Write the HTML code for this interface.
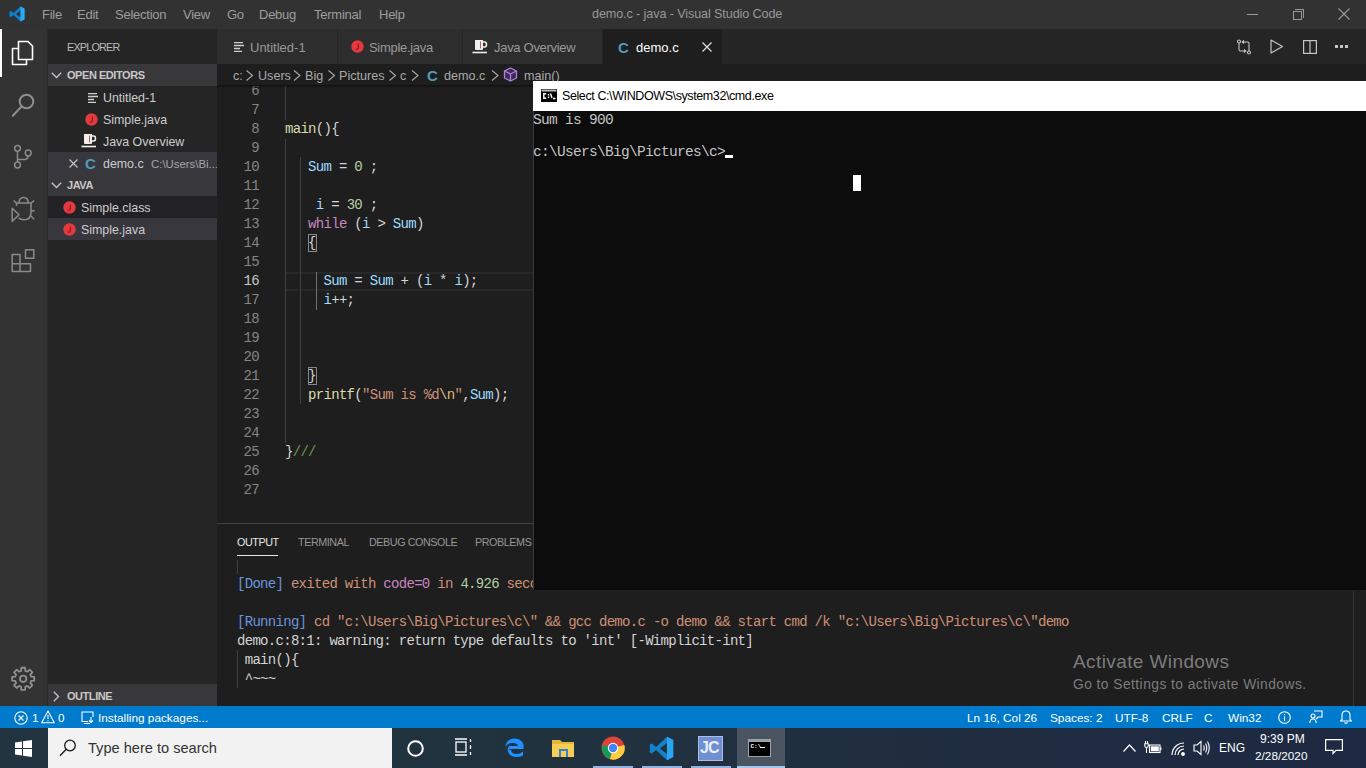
<!DOCTYPE html>
<html><head><meta charset="utf-8">
<style>
*{margin:0;padding:0;box-sizing:border-box}
html,body{width:1366px;height:768px;overflow:hidden;background:#1e1e1e;font-family:"Liberation Sans",sans-serif;}
.a{position:absolute}
.t{position:absolute;white-space:pre;line-height:1}
#title{left:0;top:0;width:1366px;height:29px;background:#323233}
#act{left:0;top:29px;width:48px;height:677px;background:#333333}
#side{left:48px;top:29px;width:169px;height:677px;background:#252526;overflow:hidden}
#tabs{left:217px;top:29px;width:1149px;height:35px;background:#252526}
#editor{left:217px;top:64px;width:1149px;height:459px;background:#1e1e1e;overflow:hidden}
#panel{left:217px;top:523px;width:1149px;height:183px;background:#1e1e1e;border-top:1px solid #414141;overflow:hidden}
#status{left:0;top:706px;width:1366px;height:22px;background:#007acc}
#taskbar{left:0;top:728px;width:1366px;height:40px;background:linear-gradient(90deg,#22343f 0%,#21323f 40%,#1f2c40 75%,#1d2942 100%)}
.mono{font-family:"Liberation Mono",monospace}
.menu{top:8px;font-size:13px;letter-spacing:-0.25px;color:#9d9d9d}
.sh{position:absolute;left:0;width:169px;height:22px;background:#38383a}
.hd{font-size:11px;letter-spacing:-0.45px;font-weight:bold;color:#c8c8c8}
.it{font-size:12.4px;color:#cccccc}
.tab{position:absolute;top:0;height:35px;background:#2d2d2d;border-right:1px solid #252526}
.tt{font-size:13px;color:#999999;top:12px}
.bc{font-size:12.6px;color:#a9a9a9;top:70px}
.chev{position:absolute}
.st{font-size:11.8px;color:#ffffff;top:7px}
</style></head><body>
<!-- TITLE -->
<div id="title" class="a">
 <svg class="a" style="left:9px;top:6px" width="16" height="16" viewBox="0 0 16 16">
  <path d="M11.5 0.5 L15.5 2.5 V13.5 L11.5 15.5 L4.5 9 L1.8 11.2 L0.5 10.5 V5.5 L1.8 4.8 L4.5 7 Z M11.5 4.5 L7 8 L11.5 11.5 Z" fill="#0f7fd0" fill-rule="evenodd"/>
  <path d="M11.5 0.5 L15.5 2.5 V13.5 L11.5 15.5 Z" fill="#2aaaf0"/>
 </svg>
 <span class="t menu" style="left:42px">File</span>
 <span class="t menu" style="left:77px">Edit</span>
 <span class="t menu" style="left:115px">Selection</span>
 <span class="t menu" style="left:183px">View</span>
 <span class="t menu" style="left:227px">Go</span>
 <span class="t menu" style="left:259px">Debug</span>
 <span class="t menu" style="left:314px">Terminal</span>
 <span class="t menu" style="left:379px">Help</span>
 <span class="t" style="left:592px;top:8px;font-size:12.6px;letter-spacing:-0.1px;color:#989898">demo.c - java - Visual Studio Code</span>
 <div class="a" style="left:1247px;top:14px;width:11px;height:1px;background:#9a9a9a"></div>
 <div class="a" style="left:1293px;top:11px;width:9px;height:9px;border:1px solid #9a9a9a"></div>
 <div class="a" style="left:1295px;top:9px;width:9px;height:9px;border-top:1px solid #9a9a9a;border-right:1px solid #9a9a9a"></div>
 <svg class="a" style="left:1338px;top:8px" width="12" height="12" viewBox="0 0 12 12"><path d="M0.5 0.5 L11.5 11.5 M11.5 0.5 L0.5 11.5" stroke="#9a9a9a" stroke-width="1.1"/></svg>
</div>
<!-- ACTIVITY BAR -->
<div id="act" class="a">
 <div class="a" style="left:47px;top:0;width:1px;height:677px;background:#2b2b2b"></div>
 <div class="a" style="left:0;top:0;width:2px;height:48px;background:#ffffff"></div>
 <svg class="a" style="left:0;top:0" width="48" height="260" viewBox="0 29 48 260" fill="none" stroke-linejoin="round">
  <!-- files -->
  <path d="M18.5 41.5 H28 L32.5 46 V59.5 H18.5 Z" stroke="#ffffff" stroke-width="1.6"/>
  <path d="M18.5 48.5 H12.5 V64.5 H26.5 V59.5" stroke="#ffffff" stroke-width="1.6"/>
  <!-- search -->
  <circle cx="26.5" cy="101.5" r="6.8" stroke="#8f8f8f" stroke-width="2"/>
  <path d="M21.5 106.5 L12.8 115.8" stroke="#8f8f8f" stroke-width="2" stroke-linecap="round"/>
  <!-- scm -->
  <circle cx="17.5" cy="148.3" r="2.9" stroke="#8a8a8a" stroke-width="1.5"/>
  <circle cx="28.2" cy="153" r="2.9" stroke="#8a8a8a" stroke-width="1.5"/>
  <circle cx="17.5" cy="165" r="2.9" stroke="#8a8a8a" stroke-width="1.5"/>
  <path d="M17.5 151.2 V162.1 M28.2 155.9 Q28 159.5 24 159.5 H17.5" stroke="#8a8a8a" stroke-width="1.5"/>
  <!-- debug -->
  <path d="M19 203 Q19 197.5 23.6 197.5 Q28.2 197.5 28.2 203" stroke="#8a8a8a" stroke-width="1.5"/>
  <path d="M16.5 206 V203 H31 V212.5 Q31 219.8 23.8 219.8 Q20.5 219.8 18.6 217.8" stroke="#8a8a8a" stroke-width="1.5"/>
  <path d="M13.6 200.6 L16.5 203 M34.2 200.6 L31 203 M31 210.8 H34.6 M31 216 L34 219.2" stroke="#8a8a8a" stroke-width="1.4"/>
  <path d="M12.2 208.2 V221.4 L19 214.8 Z" stroke="#8a8a8a" stroke-width="1.5"/>
  <!-- extensions -->
  <path d="M12.2 254.5 H20 V263.8 H30.5 V271.4 H12.2 Z M12.2 263.8 H20 V271.4" stroke="#8a8a8a" stroke-width="1.5"/>
  <path d="M25.5 249.8 H33.8 V258.2 H25.5 Z" stroke="#8a8a8a" stroke-width="1.5"/>
 </svg>
 <svg class="a" style="left:0;top:-29px" width="48" height="706" viewBox="0 0 48 706" fill="none">
  <path d="M21.09 670.88 L21.31 667.76 L25.09 667.76 L25.31 670.88 L27.31 671.71 L29.67 669.65 L32.35 672.33 L30.29 674.69 L31.12 676.69 L34.24 676.91 L34.24 680.69 L31.12 680.91 L30.29 682.91 L32.35 685.27 L29.67 687.95 L27.31 685.89 L25.31 686.72 L25.09 689.84 L21.31 689.84 L21.09 686.72 L19.09 685.89 L16.73 687.95 L14.05 685.27 L16.11 682.91 L15.28 680.91 L12.16 680.69 L12.16 676.91 L15.28 676.69 L16.11 674.69 L14.05 672.33 L16.73 669.65 L19.09 671.71 Z" stroke="#8f8f8f" stroke-width="1.8" stroke-linejoin="round"/>
  <circle cx="23.2" cy="678.8" r="3.2" stroke="#8f8f8f" stroke-width="1.8"/>
 </svg>
</div>
<!-- SIDEBAR -->
<div id="side" class="a">
 <span class="t" style="left:19px;top:13px;font-size:10.8px;letter-spacing:-0.8px;color:#bbbbbb">EXPLORER</span>
 <div class="sh" style="top:35px"></div>
 <svg class="a" style="left:3px;top:43px" width="12" height="7" viewBox="0 0 12 7" fill="none"><path d="M0.8 0.8 L5.5 5.5 L10.2 0.8" stroke="#c5c5c5" stroke-width="1.3"/></svg>
 <span class="t hd" style="left:19px;top:41px">OPEN EDITORS</span>
 <!-- Untitled-1 -->
 <svg class="a" style="left:40px;top:64px" width="11" height="10" viewBox="0 0 11 10"><path d="M0 0.5 H9 M0 3.5 H10 M0 6.5 H6 M0 9.5 H8" stroke="#cfcfcf" stroke-width="1.3"/></svg>
 <span class="t it" style="left:55px;top:63px">Untitled-1</span>
 <!-- Simple.java -->
 <svg class="a" style="left:37px;top:84px" width="13" height="13" viewBox="0 0 13 13"><circle cx="6.5" cy="6.5" r="6.2" fill="#e3393f"/><path d="M7.3 3.5 V8 Q7.3 9.3 6 9.3 Q5 9.3 4.8 8.6" stroke="#6a1518" stroke-width="0.9" fill="none"/></svg>
 <span class="t it" style="left:55px;top:85px">Simple.java</span>
 <!-- Java Overview -->
 <svg class="a" style="left:33px;top:104px" width="16" height="15" viewBox="0 0 16 15"><path d="M3 1 H11 V10 Q11 11 10 11 H4 Q3 11 3 10 Z" fill="#f0f0f0"/><path d="M11 3 H12.5 Q14.5 3 14.5 5.5 Q14.5 8 12.5 8 H11" stroke="#f0f0f0" stroke-width="1.5" fill="none"/><path d="M0.5 13.5 H15" stroke="#f0f0f0" stroke-width="1.6"/><path d="M8.5 2.5 V9.5" stroke="#c02b2b" stroke-width="0.8"/></svg>
 <span class="t it" style="left:55px;top:107px">Java Overview</span>
 <!-- demo.c row -->
 <div class="a" style="left:0;top:123px;width:169px;height:22px;background:#37373d"></div>
 <svg class="a" style="left:21px;top:130px" width="9" height="9" viewBox="0 0 9 9"><path d="M0.5 0.5 L8.5 8.5 M8.5 0.5 L0.5 8.5" stroke="#c5c5c5" stroke-width="1.2"/></svg>
 <span class="t" style="left:37px;top:127px;font-size:15px;font-weight:bold;color:#519aba">C</span>
 <span class="t it" style="left:55px;top:129px">demo.c</span>
 <span class="t" style="left:103px;top:130px;font-size:11.4px;color:#a6a6a6">C:\Users\Bi...</span>
 <!-- JAVA header -->
 <div class="sh" style="top:145px"></div>
 <svg class="a" style="left:3px;top:153px" width="12" height="7" viewBox="0 0 12 7" fill="none"><path d="M0.8 0.8 L5.5 5.5 L10.2 0.8" stroke="#c5c5c5" stroke-width="1.3"/></svg>
 <span class="t hd" style="left:19px;top:151px">JAVA</span>
 <!-- Simple.class -->
 <div class="a" style="left:0;top:167px;width:169px;height:22px;background:#222224"></div>
 <svg class="a" style="left:15px;top:172px" width="13" height="13" viewBox="0 0 13 13"><circle cx="6.5" cy="6.5" r="6.2" fill="#e3393f"/><path d="M7.3 3.5 V8 Q7.3 9.3 6 9.3 Q5 9.3 4.8 8.6" stroke="#6a1518" stroke-width="0.9" fill="none"/></svg>
 <span class="t it" style="left:33px;top:173px">Simple.class</span>
 <!-- Simple.java selected -->
 <div class="a" style="left:0;top:189px;width:169px;height:22px;background:#37373d"></div>
 <svg class="a" style="left:15px;top:194px" width="13" height="13" viewBox="0 0 13 13"><circle cx="6.5" cy="6.5" r="6.2" fill="#e3393f"/><path d="M7.3 3.5 V8 Q7.3 9.3 6 9.3 Q5 9.3 4.8 8.6" stroke="#6a1518" stroke-width="0.9" fill="none"/></svg>
 <span class="t it" style="left:33px;top:195px">Simple.java</span>
 <!-- OUTLINE -->
 <div class="sh" style="top:655px"></div>
 <svg class="a" style="left:5px;top:662px" width="7" height="12" viewBox="0 0 7 12" fill="none"><path d="M0.8 0.8 L5.5 5.5 L0.8 10.2" stroke="#c5c5c5" stroke-width="1.3"/></svg>
 <span class="t hd" style="left:19px;top:662px">OUTLINE</span>
</div>
<!-- TABS -->
<div id="tabs" class="a">
 <div class="tab" style="left:0;width:121px"></div>
 <div class="tab" style="left:121px;width:125px"></div>
 <div class="tab" style="left:246px;width:140px"></div>
 <div class="tab" style="left:386px;width:120px;background:#1e1e1e"></div>
 <svg class="a" style="left:17px;top:13px" width="11" height="10" viewBox="0 0 11 10"><path d="M0 0.5 H9 M0 3.5 H10 M0 6.5 H6 M0 9.5 H8" stroke="#cfcfcf" stroke-width="1.3"/></svg>
 <span class="t tt" style="left:33px">Untitled-1</span>
 <svg class="a" style="left:134px;top:11px" width="13" height="13" viewBox="0 0 13 13"><circle cx="6.5" cy="6.5" r="6.2" fill="#e3393f"/><path d="M7.3 3.5 V8 Q7.3 9.3 6 9.3 Q5 9.3 4.8 8.6" stroke="#6a1518" stroke-width="0.9" fill="none"/></svg>
 <span class="t tt" style="left:152px;letter-spacing:-0.3px">Simple.java</span>
 <svg class="a" style="left:255px;top:10px" width="16" height="15" viewBox="0 0 16 15"><path d="M3 1 H11 V10 Q11 11 10 11 H4 Q3 11 3 10 Z" fill="#f0f0f0"/><path d="M11 3 H12.5 Q14.5 3 14.5 5.5 Q14.5 8 12.5 8 H11" stroke="#f0f0f0" stroke-width="1.5" fill="none"/><path d="M0.5 13.5 H15" stroke="#f0f0f0" stroke-width="1.6"/><path d="M8.5 2.5 V9.5" stroke="#c02b2b" stroke-width="0.8"/></svg>
 <span class="t tt" style="left:277px;letter-spacing:-0.3px">Java Overview</span>
 <span class="t" style="left:401px;top:11px;font-size:15px;font-weight:bold;color:#519aba">C</span>
 <span class="t tt" style="left:419px;color:#ffffff">demo.c</span>
 <svg class="a" style="left:485px;top:13px" width="10" height="10" viewBox="0 0 10 10"><path d="M0.5 0.5 L9.5 9.5 M9.5 0.5 L0.5 9.5" stroke="#e0e0e0" stroke-width="1.2"/></svg>
 <!-- editor actions -->
 <svg class="a" style="left:1019px;top:10px" width="16" height="16" viewBox="0 0 16 16" fill="none" stroke="#c5c5c5" stroke-width="1.1">
  <circle cx="3" cy="2.5" r="1.5"/><path d="M3 4 V10.5 Q3 12 4.5 12 H9.5 M8 10.5 L9.8 12 L8 13.5"/>
  <circle cx="13" cy="13.5" r="1.5"/><path d="M13 12 V4.5 Q13 3 11.5 3 H6.5 M8 1.5 L6.2 3 L8 4.5"/>
 </svg>
 <svg class="a" style="left:1053px;top:10px" width="14" height="15" viewBox="0 0 14 15" fill="none" stroke="#c5c5c5" stroke-width="1.2"><path d="M1 1 L12.5 7.5 L1 14 Z" stroke-linejoin="round"/></svg>
 <svg class="a" style="left:1086px;top:11px" width="14" height="14" viewBox="0 0 14 14" fill="none" stroke="#c5c5c5" stroke-width="1.2"><rect x="0.6" y="0.6" width="12.8" height="12.8"/><path d="M7 0.6 V13.4"/></svg>
 <div class="a" style="left:1118px;top:16px;width:3px;height:3px;background:#c5c5c5"></div>
 <div class="a" style="left:1123px;top:16px;width:3px;height:3px;background:#c5c5c5"></div>
 <div class="a" style="left:1128px;top:16px;width:3px;height:3px;background:#c5c5c5"></div>
</div>
<!-- EDITOR -->
<div id="editor" class="a"></div>
<!-- breadcrumbs -->
<span class="t bc" style="left:233px">c:</span>
<span class="t bc" style="left:258px">Users</span>
<span class="t bc" style="left:305px">Big</span>
<span class="t bc" style="left:339px">Pictures</span>
<span class="t bc" style="left:400px">c</span>
<span class="t bc" style="left:444px">demo.c</span>
<span class="t bc" style="left:524px">main()</span>
<svg class="a" style="left:245px;top:69px" width="300" height="13" viewBox="245 69 300 13" fill="none" stroke="#a9a9a9" stroke-width="1.1">
 <path d="M246.5 70.5 L252.5 75.5 L246.5 80.5"/>
 <path d="M294 70.5 L300 75.5 L294 80.5"/>
 <path d="M328.5 70.5 L334.5 75.5 L328.5 80.5"/>
 <path d="M389.5 70.5 L395.5 75.5 L389.5 80.5"/>
 <path d="M412 70.5 L418 75.5 L412 80.5"/>
 <path d="M492 70.5 L498 75.5 L492 80.5"/>
</svg>
<span class="t" style="left:427px;top:68px;font-size:15px;font-weight:bold;color:#519aba">C</span>
<svg class="a" style="left:503px;top:67px" width="15" height="15" viewBox="0 0 15 15" fill="none" stroke="#b180d7" stroke-width="1.3" stroke-linejoin="round">
 <path d="M7.5 1 L13.5 4 V11 L7.5 14 L1.5 11 V4 Z" fill="#3b2a57"/><path d="M1.5 4 L7.5 7 L13.5 4 M7.5 7 V14"/>
</svg>
<!-- CODE -->
<div class="a mono" style="left:217px;top:86px;width:316px;height:437px;overflow:hidden;font-size:14px;letter-spacing:-0.7px;line-height:19px">
 <!-- current line highlight -->
 <div class="a" style="left:68px;top:185.5px;width:260px;height:19px;border-top:2px solid #282828;border-bottom:2px solid #282828"></div>
 <!-- indent guides -->
 <div class="a" style="left:68px;top:-4px;width:1px;height:38px;background:#404040"></div>
 <div class="a" style="left:68px;top:53px;width:1px;height:304px;background:#404040"></div>
 <div class="a" style="left:83px;top:71px;width:1px;height:247px;background:#404040"></div>
 <div class="a" style="left:99px;top:185.5px;width:1px;height:38px;background:#707070"></div>
 <!-- bracket boxes -->
 <div class="a" style="left:91px;top:148px;width:9px;height:18px;border:1px solid #888888"></div>
 <div class="a" style="left:91px;top:281px;width:9px;height:18px;border:1px solid #888888"></div>
 <!-- line numbers -->
 <div class="a" style="left:0;top:-4px;width:42px;text-align:right;color:#858585;white-space:pre;letter-spacing:-0.7px">6
7
8
9
10
11
12
13
14
15
<span style="color:#c6c6c6">16</span>
17
18
19
20
21
22
23
24
25
26
27</div>
 <div class="a" style="left:68px;top:-4px;color:#d4d4d4;white-space:pre">

<span style="color:#dcdcaa">main</span>(){

   <span style="color:#9cdcfe">Sum</span> = <span style="color:#b5cea8">0</span> ;

    <span style="color:#9cdcfe">i</span> = <span style="color:#b5cea8">30</span> ;
   <span style="color:#c586c0">while</span> (<span style="color:#9cdcfe">i</span> &gt; <span style="color:#9cdcfe">Sum</span>)
   {

     <span style="color:#9cdcfe">Sum</span> = <span style="color:#9cdcfe">Sum</span> + (<span style="color:#9cdcfe">i</span> * <span style="color:#9cdcfe">i</span>);
     <span style="color:#9cdcfe">i</span>++;



   }
   <span style="color:#dcdcaa">printf</span>(<span style="color:#ce9178">"Sum is </span><span style="color:#ce9178">%d</span><span style="color:#d7ba7d">\n</span><span style="color:#ce9178">"</span>,<span style="color:#9cdcfe">Sum</span>);


}<span style="color:#6a9955">///</span>

</div>
</div>
<!-- breadcrumb shadow -->
<div class="a" style="left:217px;top:85px;width:316px;height:3px;background:linear-gradient(#000000 0%,rgba(0,0,0,0) 100%);opacity:0.5"></div>
<!-- PANEL -->
<div id="panel" class="a"></div>
<span class="t" style="left:237px;top:537px;font-size:10.8px;letter-spacing:-0.45px;color:#e7e7e7">OUTPUT</span>
<div class="a" style="left:237px;top:555px;width:41px;height:1px;background:#e7e7e7"></div>
<span class="t" style="left:298px;top:537px;font-size:10.8px;letter-spacing:-0.45px;color:#969696">TERMINAL</span>
<span class="t" style="left:369px;top:537px;font-size:10.8px;letter-spacing:-0.45px;color:#969696">DEBUG CONSOLE</span>
<span class="t" style="left:475px;top:537px;font-size:10.8px;letter-spacing:-0.45px;color:#969696">PROBLEMS</span>
<div class="a mono" style="left:237px;top:560px;width:1129px;height:148px;overflow:hidden;font-size:14px;letter-spacing:-0.7px;line-height:19px;color:#d4d4d4;white-space:pre">
 <div class="a" style="left:0;top:0;width:1px;height:14px;background:#404040"></div>
 <div class="a" style="left:0;top:90px;width:1px;height:38px;background:#404040"></div>
 <div class="a" style="left:0;top:15px;white-space:pre"><span style="color:#6a95dc">[Done]</span> <span style="color:#ce9178">exited with</span> <span style="color:#c586c0">code=0</span> <span style="color:#ce9178">in</span> <span style="color:#b5cea8">4.926</span> <span style="color:#ce9178">seconds</span>

<span style="color:#6a95dc">[Running]</span> <span style="color:#ce9178">cd "c:\Users\Big\Pictures\c\" &amp;&amp; gcc demo.c -o demo &amp;&amp; start cmd /k "c:\Users\Big\Pictures\c\"demo</span>
demo.c:8:1: warning: return type defaults to 'int' [-Wimplicit-int]
 main(){
 ^~~~</div>
</div>
<div class="a" style="left:1353px;top:591px;width:1px;height:115px;background:#383838"></div>
<!-- Activate windows watermark -->
<span class="t" style="left:1073px;top:652px;font-size:19px;letter-spacing:0.4px;color:#7c7c7c">Activate Windows</span>
<span class="t" style="left:1073px;top:678px;font-size:13.8px;letter-spacing:0.45px;color:#7c7c7c">Go to Settings to activate Windows.</span>
<!-- CMD WINDOW -->
<div class="a" style="left:533px;top:81px;width:833px;height:509px;background:#0c0c0c;border-left:1px solid #3a3a3a"></div>
<div class="a" style="left:533px;top:81px;width:833px;height:30px;background:#ffffff"></div>
<svg class="a" style="left:541px;top:89px" width="16" height="13" viewBox="0 0 16 13">
 <rect x="0" y="0" width="16" height="13" fill="#000000"/><rect x="0.5" y="0.5" width="15" height="2" fill="#bdbdbd"/>
 <path d="M5.2 4.8 H2.8 V9.2 H5.2 M7.5 5 V6.5 M7.5 7.5 V9 M9.5 4.5 L11 9 M12 9.5 H14.5" stroke="#ffffff" stroke-width="1.4" fill="none"/>
</svg>
<span class="t" style="left:562px;top:89.5px;font-size:12.5px;letter-spacing:-0.4px;color:#000000">Select C:\WINDOWS\system32\cmd.exe</span>
<div class="a mono" style="left:533px;top:112px;font-size:14.5px;letter-spacing:-0.7px;line-height:16px;color:#c4c4c4;white-space:pre">Sum is 900

c:\Users\Big\Pictures\c&gt;</div>
<div class="a" style="left:725px;top:155px;width:8px;height:3px;background:#ffffff"></div>
<div class="a" style="left:853px;top:175px;width:8px;height:16px;background:#ffffff"></div>
<!-- STATUS BAR -->
<div id="status" class="a">
 <svg class="a" style="left:14px;top:5px" width="14" height="14" viewBox="0 0 14 14" fill="none" stroke="#ffffff" stroke-width="1.1"><circle cx="7" cy="7" r="6.2"/><path d="M4.5 4.5 L9.5 9.5 M9.5 4.5 L4.5 9.5"/></svg>
 <span class="t st" style="left:32px">1</span>
 <svg class="a" style="left:41px;top:4px" width="14" height="14" viewBox="0 0 14 14" fill="none" stroke="#ffffff" stroke-width="1.1"><path d="M7 1 L13.3 12.8 H0.7 Z" stroke-linejoin="round"/><path d="M7 5 V9 M7 10.2 V11.3"/></svg>
 <span class="t st" style="left:58px">0</span>
 <svg class="a" style="left:81px;top:5px" width="13" height="13" viewBox="0 0 13 13" fill="none" stroke="#ffffff" stroke-width="1.1"><path d="M7 10.5 H1 V1 H12 V6"/><path d="M10 6 V11.5 M8 9.5 L10 11.5 L12 9.5"/><path d="M3 12.5 H9"/></svg>
 <span class="t st" style="left:98px">Installing packages...</span>
 <span class="t st" style="left:967px">Ln 16, Col 26</span>
 <span class="t st" style="left:1050px">Spaces: 2</span>
 <span class="t st" style="left:1115px">UTF-8</span>
 <span class="t st" style="left:1162px">CRLF</span>
 <span class="t st" style="left:1204px">C</span>
 <span class="t st" style="left:1228px">Win32</span>
 <svg class="a" style="left:1278px;top:5px" width="13" height="13" viewBox="0 0 13 13" fill="none" stroke="#ffffff" stroke-width="1.1"><circle cx="6.5" cy="6.5" r="5.8"/><path d="M6.5 5.5 V10 M6.5 3 V4.2"/></svg>
 <svg class="a" style="left:1309px;top:4px" width="14" height="14" viewBox="0 0 14 14" fill="none" stroke="#ffffff" stroke-width="1.1"><path d="M5 1 H13 V7 H9 L7 9"/><circle cx="4" cy="6" r="2"/><path d="M0.8 13 Q1 9 4 9 Q7 9 7.2 13"/></svg>
 <svg class="a" style="left:1340px;top:4px" width="12" height="14" viewBox="0 0 12 14" fill="none" stroke="#ffffff" stroke-width="1.1"><path d="M6 1 Q10 1 10 5.5 V9.5 L11.5 11 H0.5 L2 9.5 V5.5 Q2 1 6 1 Z"/><path d="M4.5 12.5 Q6 14 7.5 12.5"/></svg>
</div>
<!-- TASKBAR -->
<div id="taskbar" class="a">
 <svg class="a" style="left:15px;top:12px" width="17" height="17" viewBox="0 0 17 17" fill="#ffffff"><path d="M0 2.4 L7 1.4 V8 H0 Z M8 1.2 L17 0 V8 H8 Z M0 9 H7 V15.6 L0 14.6 Z M8 9 H17 V17 L8 15.8 Z"/></svg>
 <div class="a" style="left:48px;top:0;width:344px;height:40px;background:#f2f2f2"></div>
 <svg class="a" style="left:59px;top:11px" width="18" height="18" viewBox="0 0 18 18" fill="none" stroke="#1a1a1a" stroke-width="1.3"><circle cx="11" cy="6.5" r="5.3"/><path d="M7.2 10.3 L1 16.8"/></svg>
 <span class="t" style="left:88px;top:13px;font-size:14.6px;color:#333333">Type here to search</span>
 <!-- cortana -->
 <svg class="a" style="left:406px;top:11px" width="19" height="19" viewBox="0 0 19 19" fill="none" stroke="#ffffff" stroke-width="2"><circle cx="9.5" cy="9.5" r="7.3"/></svg>
 <!-- task view -->
 <svg class="a" style="left:455px;top:10px" width="18" height="18" viewBox="0 0 18 18" fill="none" stroke="#ffffff" stroke-width="1.3"><path d="M0 1 H12 M0 17 H12"/><rect x="1" y="4" width="10" height="10"/><path d="M15.5 1 V4 M15.5 7 V11 M15.5 14 V17"/></svg>
 <!-- edge -->
 <svg class="a" style="left:504px;top:9px" width="21" height="21" viewBox="0 0 21 21"><path d="M3.5 12 H19.5 Q20.5 2 11 1.5 Q2 1.5 1 11 Q2.5 6 8.5 6 Q13.5 6 14 9 H6.5 Q5.5 7 3.5 12 Z M3.5 12 Q4 20 13 20 Q16.5 20 19 18.5 V14.5 Q16 17 12.5 17 Q7.5 17 7 13 Z" fill="#1e90ff"/></svg>
 <!-- folder -->
 <svg class="a" style="left:552px;top:10px" width="23" height="20" viewBox="0 0 23 20"><path d="M0 2 H8 L10 4 H22 V19 H0 Z" fill="#e6b53a"/><path d="M0 6 H22 V19 H0 Z" fill="#f7cd54"/><rect x="7" y="11" width="9" height="8" fill="#2f84d6"/><rect x="9" y="13" width="5" height="6" fill="#f7cd54"/></svg>
 <!-- chrome -->
 <svg class="a" style="left:601px;top:8px" width="24" height="24" viewBox="0 0 24 24"><circle cx="12" cy="12" r="11.5" fill="#db4437"/><path d="M12 12 L1.5 9 A11.5 11.5 0 0 0 9 23.1 Z" fill="#0f9d58"/><path d="M12 12 L23.3 9 A11.5 11.5 0 0 1 9 23.1 Z" fill="#ffcd40"/><circle cx="12" cy="12" r="5.2" fill="#ffffff"/><circle cx="12" cy="12" r="4.2" fill="#4285f4"/></svg>
 <!-- vscode -->
 <svg class="a" style="left:649px;top:8px" width="25" height="25" viewBox="0 0 16 16"><path d="M11.5 0.5 L15.5 2.5 V13.5 L11.5 15.5 L4.5 9 L1.8 11.2 L0.5 10.5 V5.5 L1.8 4.8 L4.5 7 Z M11.5 4.5 L7 8 L11.5 11.5 Z" fill="#1581c8" fill-rule="evenodd"/><path d="M11.5 0.5 L15.5 2.5 V13.5 L11.5 15.5 Z" fill="#2aa6ee"/></svg>
 <!-- jcreator -->
 <div class="a" style="left:698px;top:8px;width:25px;height:25px;background:#6f8fd0;border:1px solid #a9bde8"></div>
 <span class="t" style="left:700px;top:12px;font-size:16px;font-weight:bold;color:#e8eefc;letter-spacing:-1px">JC</span>
 <!-- cmd active -->
 <div class="a" style="left:737px;top:0;width:48px;height:40px;background:#4a5561"></div>
 <svg class="a" style="left:748px;top:11px" width="23" height="18" viewBox="0 0 23 18"><rect x="0" y="0" width="23" height="18" fill="#9aa3ad"/><rect x="1" y="3" width="21" height="14" fill="#000000"/><text x="2.5" y="9" font-family="Liberation Mono" font-size="6" fill="#ffffff" font-weight="bold">C:\</text><rect x="12" y="8" width="5" height="1" fill="#fff"/></svg>
 <!-- running indicators -->
 <div class="a" style="left:593px;top:38px;width:40px;height:2px;background:#8fb4e0"></div>
 <div class="a" style="left:642px;top:38px;width:40px;height:2px;background:#8fb4e0"></div>
 <div class="a" style="left:691px;top:38px;width:40px;height:2px;background:#8fb4e0"></div>
 <div class="a" style="left:737px;top:38px;width:48px;height:2px;background:#a6c8f0"></div>
 <!-- tray -->
 <svg class="a" style="left:1123px;top:16px" width="13" height="8" viewBox="0 0 13 8" fill="none" stroke="#ffffff" stroke-width="1.2"><path d="M0.5 7.5 L6.5 1 L12.5 7.5"/></svg>
 <svg class="a" style="left:1144px;top:13px" width="18" height="13" viewBox="0 0 18 13" fill="none" stroke="#ffffff" stroke-width="1.1"><path d="M1.5 0 V2.5 M3.5 0 V2.5 M0.8 2.8 H4.2 V5 Q4.2 6.5 2.5 6.5 Q0.8 6.5 0.8 5 Z M2.5 6.5 V12"/><rect x="5.5" y="4" width="10.5" height="7.5"/><rect x="6.8" y="5.3" width="8" height="5" fill="#ffffff" stroke="none"/><path d="M16.8 6.2 V9.2" stroke-width="1.2"/></svg>
 <svg class="a" style="left:1171px;top:14px" width="15" height="14" viewBox="0 0 15 14" fill="none" stroke="#ffffff" stroke-width="1.2"><path d="M1 13 A12 12 0 0 1 13 1 M4 13 A9 9 0 0 1 13 4 M7 13 A6 6 0 0 1 13 7"/><circle cx="12" cy="12" r="1.3" fill="#ffffff"/></svg>
 <svg class="a" style="left:1193px;top:12px" width="17" height="16" viewBox="0 0 17 16" fill="none" stroke="#ffffff" stroke-width="1.1"><path d="M1 5 H4 L8 1.5 V14.5 L4 11 H1 Z"/><path d="M10.5 5.5 Q12 8 10.5 10.5 M12.5 3.5 Q15 8 12.5 12.5 M14.5 1.5 Q18 8 14.5 14.5"/></svg>
 <span class="t" style="left:1219px;top:14px;font-size:12px;color:#ffffff">ENG</span>
 <span class="t" style="left:1260px;top:5px;font-size:12px;color:#ffffff">9:39 PM</span>
 <span class="t" style="left:1255px;top:23px;font-size:11.8px;color:#ffffff">2/28/2020</span>
 <svg class="a" style="left:1325px;top:11px" width="18" height="16" viewBox="0 0 18 16" fill="none" stroke="#ffffff" stroke-width="1.2"><path d="M0.6 0.6 H17.4 V11.4 H11 L8 14.5 V11.4 H0.6 Z"/></svg>
</div>
</body></html>
